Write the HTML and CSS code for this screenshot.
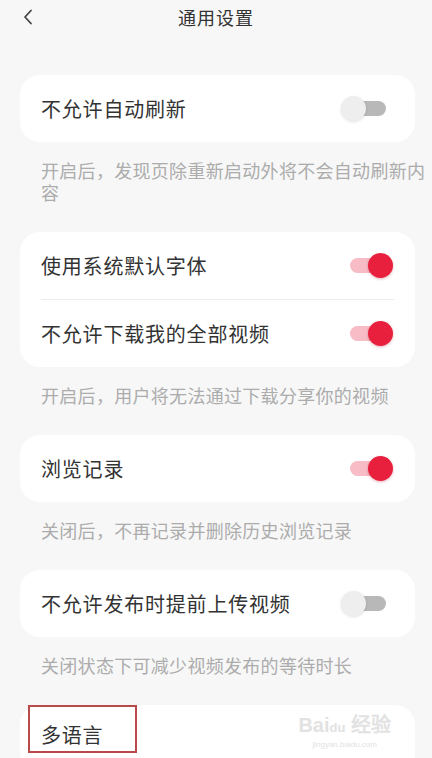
FILE: index.html
```
<!DOCTYPE html>
<html lang="zh-CN">
<head>
    <meta charset="UTF-8">
    <meta name="viewport" content="width=device-width, initial-scale=1.0">
    <title>通用设置</title>
    <link rel="stylesheet" href="styles.css">
</head>
<body>
    <header class="topbar">
        <span class="back">
            <svg width="10" height="16" viewBox="0 0 10 16"><path d="M8 1.5 L2 8 L8 14.5" fill="none" stroke="#444" stroke-width="1.8" stroke-linecap="round" stroke-linejoin="round"/></svg>
        </span>
        <h1>通用设置</h1>
    </header>

    <main class="settings">
        <section class="card">
            <div class="row">
                <span class="label">不允许自动刷新</span>
                <span class="toggle"><i class="knob"></i></span>
            </div>
        </section>
        <p class="hint">开启后，发现页除重新启动外将不会自动刷新内容</p>

        <section class="card">
            <div class="row">
                <span class="label">使用系统默认字体</span>
                <span class="toggle on"><i class="knob"></i></span>
            </div>
            <div class="divider"></div>
            <div class="row">
                <span class="label">不允许下载我的全部视频</span>
                <span class="toggle on"><i class="knob"></i></span>
            </div>
        </section>
        <p class="hint">开启后，用户将无法通过下载分享你的视频</p>

        <section class="card">
            <div class="row">
                <span class="label">浏览记录</span>
                <span class="toggle on"><i class="knob"></i></span>
            </div>
        </section>
        <p class="hint">关闭后，不再记录并删除历史浏览记录</p>

        <section class="card">
            <div class="row">
                <span class="label">不允许发布时提前上传视频</span>
                <span class="toggle"><i class="knob"></i></span>
            </div>
        </section>
        <p class="hint">关闭状态下可减少视频发布的等待时长</p>

        <section class="card last">
            <div class="row">
                <span class="label">多语言</span>
            </div>
            <div class="mark"></div>
            <div class="watermark">
                <span class="wm-logo">Bai<b>du</b> 经验</span>
                <span class="wm-url">jingyan.baidu.com</span>
            </div>
        </section>
    </main>
</body>
</html>
```

FILE: styles.css
```
* {
    box-sizing: border-box;
}

body {
    margin: 0;
    background-color: #f7f7f7;
    color: #333;
    font-family: "Noto Sans CJK SC", "Noto Sans", sans-serif;
    overflow: hidden;
}

.topbar {
    height: 34px;
    display: flex;
    align-items: center;
    justify-content: center;
    position: relative;
}

.topbar h1 {
    margin: 0;
    font-size: 18px;
    font-weight: 400;
    letter-spacing: 1px;
    color: #333;
    line-height: 32px;
}

.back {
    position: absolute;
    left: 23px;
    top: 9px;
    display: flex;
}

.settings {
    padding: 41px 0 0 20px;
}

.card {
    width: 395px;
    background-color: #fff;
    border-radius: 20px;
    padding: 0 29px 0 21px;
    position: relative;
}

.row {
    height: 67px;
    display: flex;
    align-items: center;
    justify-content: space-between;
}

.label {
    font-size: 20px;
    letter-spacing: 0.8px;
    color: #333;
}

.divider {
    height: 1px;
    background-color: #ececec;
    margin-right: -8px;
}

.hint {
    margin: 0;
    padding: 17px 0 29px 21px;
    width: 412px;
    font-size: 18px;
    line-height: 22px;
    letter-spacing: 0.3px;
    color: #acacac;
}

/* interruptor */
.toggle {
    position: relative;
    width: 36px;
    height: 15px;
    border-radius: 8px;
    background-color: #b8b8b8;
}

.toggle .knob {
    position: absolute;
    top: -5px;
    left: -9px;
    width: 25px;
    height: 25px;
    border-radius: 50%;
    background-color: #eeeeee;
    box-shadow: 0 1px 3px rgba(0, 0, 0, 0.12);
}

.toggle.on {
    background-color: #f7bcc6;
}

.toggle.on .knob {
    left: 18px;
    background-color: #e8203d;
    box-shadow: 0 1px 3px rgba(160, 0, 30, 0.3);
}

.card.last {
    height: 68px;
}

.card.last .row {
    height: 58px;
}

.mark {
    position: absolute;
    left: 8px;
    top: 0;
    width: 109px;
    height: 48px;
    border: 2px solid #b94a4a;
}

.watermark {
    position: absolute;
    right: 24px;
    top: 8px;
    display: flex;
    flex-direction: column;
    align-items: center;
    color: #e2e2e2;
    font-family: "Liberation Sans", sans-serif;
}

.wm-logo {
    font-size: 20px;
    font-weight: 700;
    line-height: 24px;
}

.wm-logo b {
    font-size: 13px;
}

.wm-url {
    font-size: 8px;
    line-height: 10px;
}
```
